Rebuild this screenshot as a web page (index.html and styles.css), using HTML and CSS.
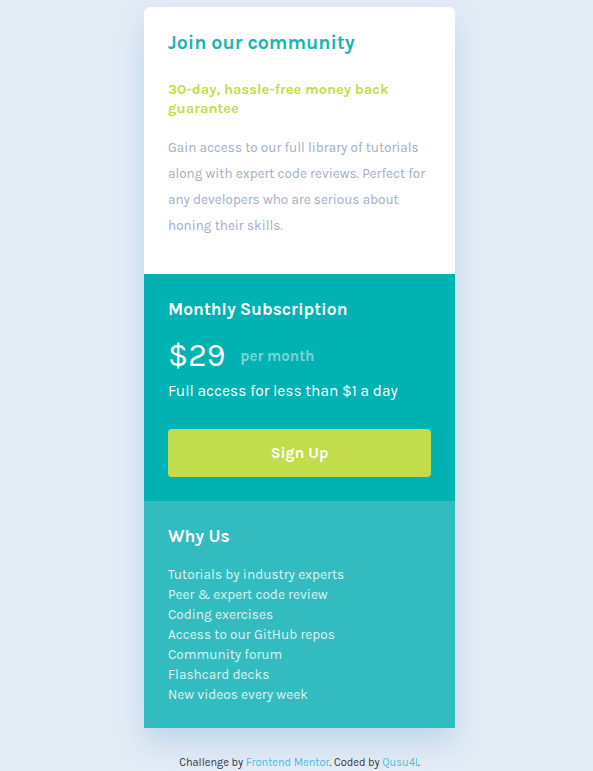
FILE: index.html
```html
<!DOCTYPE html>
<html lang="en">
<head>
<meta charset="utf-8">
<title>Single price grid component</title>
<link rel="stylesheet" href="styles.css">
</head>
<body>
<main class="page">
  <article class="card">
    <section class="intro">
      <h1 class="intro-title">Join our community</h1>
      <h2 class="intro-guarantee">30-day, hassle-free money back guarantee</h2>
      <p class="intro-text">Gain access to our full library of tutorials along with expert code reviews. Perfect for any developers who are serious about honing their skills.</p>
    </section>
    <section class="subscription">
      <h2 class="section-title">Monthly Subscription</h2>
      <div class="price-row">
        <span class="price">$29</span>
        <span class="period">per month</span>
      </div>
      <p class="price-note">Full access for less than $1 a day</p>
      <button class="signup" type="button">Sign Up</button>
    </section>
    <section class="why">
      <h2 class="section-title">Why Us</h2>
      <ul class="why-list">
        <li>Tutorials by industry experts</li>
        <li>Peer &amp; expert code review</li>
        <li>Coding exercises</li>
        <li>Access to our GitHub repos</li>
        <li>Community forum</li>
        <li>Flashcard decks</li>
        <li>New videos every week</li>
      </ul>
    </section>
  </article>
  <footer class="attribution">
    Challenge by <a href="#">Frontend Mentor</a>. Coded by <a href="#">Qusu4l</a>.
  </footer>
</main>
</body>
</html>
```
FILE: styles.css
```css
* { box-sizing: border-box; }
html, body { margin: 0; padding: 0; }
body {
  background: #e4ecf6;
  font-family: "Karla", "Liberation Sans", sans-serif;
  min-height: 771px;
}
.page {
  display: flex;
  flex-direction: column;
  align-items: center;
  padding: 7px 0 0 6px;
}
.card {
  width: 311px;
  border-radius: 6px 6px 0 0;
  overflow: hidden;
  box-shadow: 0 15px 30px rgba(160, 195, 225, 0.55);
}
.intro {
  background: #ffffff;
  padding: 24px 24px 35px;
}
.intro-title {
  margin: 0;
  color: #19b3b2;
  font-size: 19.6px;
  line-height: 24px;
  font-weight: 700;
}
.intro-guarantee {
  margin: 25px 0 0;
  color: #c2dd4a;
  font-size: 14.6px;
  line-height: 19px;
  font-weight: 700;
}
.intro-text {
  margin: 17px 0 0;
  color: #a3aec3;
  font-size: 13.5px;
  line-height: 26px;
}
.subscription {
  background: #00b2b2;
  color: #ffffff;
  padding: 24px 24px 24px;
}
.section-title {
  margin: 0;
  font-size: 17.4px;
  line-height: 22px;
  font-weight: 700;
  color: #ffffff;
}
.price-row {
  display: flex;
  align-items: center;
  gap: 15px;
  margin-top: 16px;
}
.price {
  font-size: 32px;
  line-height: 40px;
}
.period {
  color: #80d4d4;
  font-size: 15px;
  font-weight: 700;
}
.price-note {
  margin: 5px 0 0;
  font-size: 15.5px;
  line-height: 20px;
}
.signup {
  display: block;
  width: 100%;
  height: 48px;
  margin-top: 28px;
  border: 0;
  border-radius: 4px;
  background: #c2dc4c;
  color: #ffffff;
  font-family: inherit;
  font-size: 15.5px;
  font-weight: 700;
  cursor: pointer;
}
.why {
  background: #33bcc0;
  padding: 24px 24px 23px;
}
.why-list {
  list-style: none;
  margin: 18px 0 0;
  padding: 0;
  color: #dff3f3;
  font-size: 13.6px;
  line-height: 20px;
}
.attribution {
  margin-top: 28px;
  font-size: 11px;
  color: #333344;
  text-align: center;
}
.attribution a {
  color: #3fbfe0;
  text-decoration: none;
}
```
